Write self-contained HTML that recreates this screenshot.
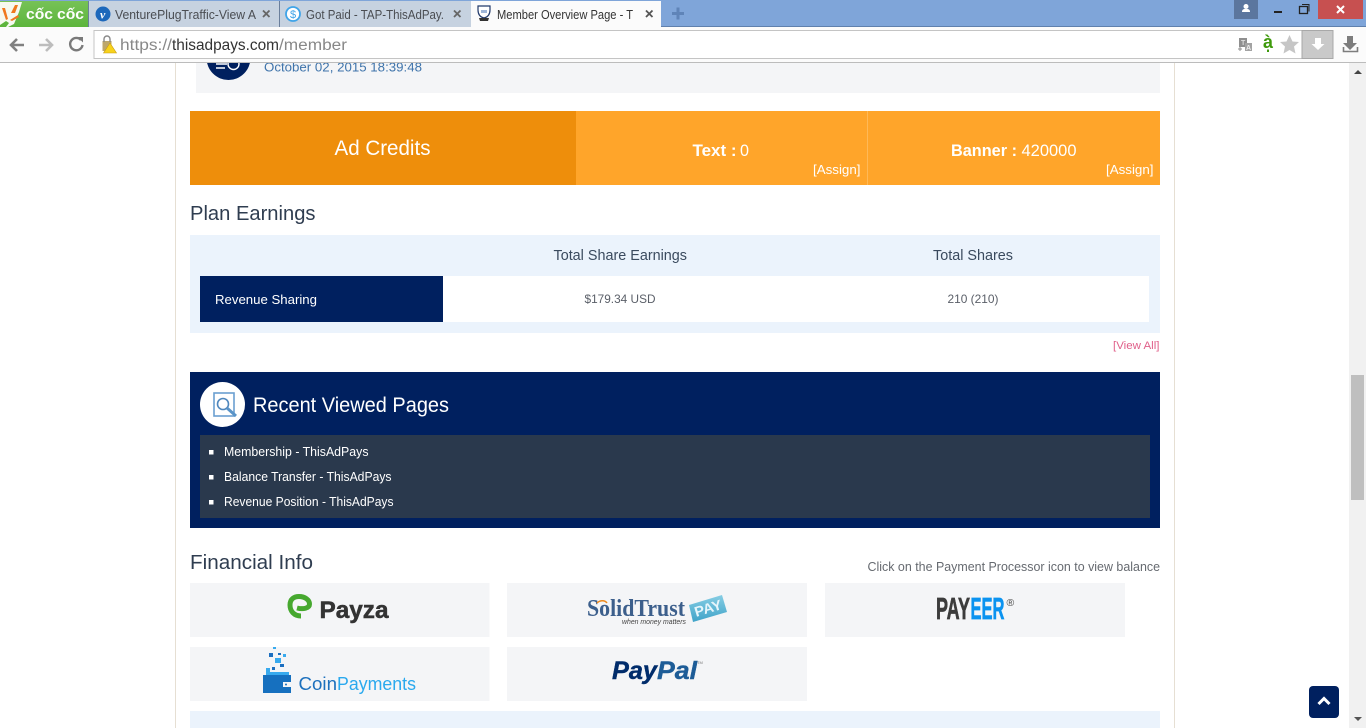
<!DOCTYPE html>
<html><head><meta charset="utf-8"><title>Member Overview Page</title>
<style>
html,body{margin:0;padding:0;width:1366px;height:728px;overflow:hidden;background:#fff}
svg{display:block}
text{font-family:"Liberation Sans","DejaVu Sans",sans-serif;white-space:pre}
</style></head><body>
<svg width="1366" height="728" viewBox="0 0 1366 728" xmlns="http://www.w3.org/2000/svg">
<defs>
<linearGradient id="g" x1="0" y1="0" x2="0" y2="1"><stop offset="0" stop-color="#77c257"/><stop offset="1" stop-color="#5db53c"/></linearGradient>
<linearGradient id="p" x1="0" y1="0" x2="0" y2="1"><stop offset="0" stop-color="#86cde4"/><stop offset="1" stop-color="#3fa3c8"/></linearGradient>
</defs>
<!-- page -->
<rect width="1366" height="728" fill="#fff"/>
<rect x="175" y="63" width="1" height="665" fill="#e6dfd3"/>
<rect x="1174" y="63" width="1" height="665" fill="#e6dfd3"/>
<rect x="196" y="63" width="964" height="30" fill="#f4f5f7"/>
<circle cx="228.500" cy="58" r="22" fill="#00205f"/>
<path d="M216 64h11M216 68h9" stroke="#fff" stroke-width="1.500"/>
<circle cx="233.500" cy="64" r="5.500" fill="none" stroke="#fff" stroke-width="1.400"/>
<text x="264" y="71.500" font-size="13" fill="#3f74ab" textLength="158" lengthAdjust="spacingAndGlyphs">October 02, 2015 18:39:48</text>

<rect x="190" y="111" width="386" height="74" fill="#ee8e0b"/>
<rect x="576" y="111" width="584" height="74" fill="#ffa52a"/>
<rect x="867" y="111" width="1" height="74" fill="#ffb957"/>
<text x="334.500" y="155" font-size="21" fill="#fff" textLength="96" lengthAdjust="spacingAndGlyphs">Ad Credits</text>
<text x="692.500" y="156" font-size="17" fill="#fff" font-weight="700" textLength="44" lengthAdjust="spacingAndGlyphs">Text :</text>
<text x="740" y="156" font-size="17" fill="#fff" textLength="9" lengthAdjust="spacingAndGlyphs">0</text>
<text x="813" y="174" font-size="13" fill="#fff" textLength="47.500" lengthAdjust="spacingAndGlyphs">[Assign]</text>
<text x="951" y="156" font-size="17" fill="#fff" font-weight="700" textLength="66" lengthAdjust="spacingAndGlyphs">Banner :</text>
<text x="1021.500" y="156" font-size="17" fill="#fff" textLength="55" lengthAdjust="spacingAndGlyphs">420000</text>
<text x="1106" y="174" font-size="13" fill="#fff" textLength="47.500" lengthAdjust="spacingAndGlyphs">[Assign]</text>

<text x="190" y="220" font-size="20.500" fill="#2f3d50" textLength="125.500" lengthAdjust="spacingAndGlyphs">Plan Earnings</text>
<rect x="190" y="235" width="970" height="98" fill="#ebf3fc"/>
<rect x="200" y="276" width="949" height="46" fill="#fff"/>
<rect x="200" y="276" width="243" height="46" fill="#00205f"/>
<text x="553.500" y="260" font-size="14.500" fill="#3a4a5e" textLength="133.500" lengthAdjust="spacingAndGlyphs">Total Share Earnings</text>
<text x="933" y="260" font-size="14.500" fill="#3a4a5e" textLength="80" lengthAdjust="spacingAndGlyphs">Total Shares</text>
<text x="215" y="304" font-size="13" fill="#fff" textLength="102" lengthAdjust="spacingAndGlyphs">Revenue Sharing</text>
<text x="584.500" y="303" font-size="12" fill="#5a5f68" textLength="71" lengthAdjust="spacingAndGlyphs">$179.34 USD</text>
<text x="947.500" y="303" font-size="12" fill="#5a5f68" textLength="51" lengthAdjust="spacingAndGlyphs">210 (210)</text>
<text x="1113" y="349" font-size="11" fill="#e0608a" textLength="46.500" lengthAdjust="spacingAndGlyphs">[View All]</text>

<rect x="190" y="372" width="970" height="156" fill="#00205f"/>
<circle cx="222.500" cy="404.500" r="22.500" fill="#fff"/>
<rect x="214" y="393" width="20" height="23" fill="none" stroke="#6a9fd0" stroke-width="1.600"/>
<circle cx="223" cy="404" r="5.500" fill="none" stroke="#4f87bd" stroke-width="1.600"/>
<path d="M227 408l9 8" stroke="#5a94c8" stroke-width="3"/>
<text x="253" y="412" font-size="21.500" fill="#fff" textLength="196" lengthAdjust="spacingAndGlyphs">Recent Viewed Pages</text>
<rect x="200" y="435" width="950" height="83" fill="#2a394d"/>
<rect x="209" y="450" width="4.500" height="4.500" fill="#fff"/>
<rect x="209" y="475" width="4.500" height="4.500" fill="#fff"/>
<rect x="209" y="500" width="4.500" height="4.500" fill="#fff"/>
<text x="224" y="456" font-size="13" fill="#fff" textLength="144.500" lengthAdjust="spacingAndGlyphs">Membership - ThisAdPays</text>
<text x="224" y="481" font-size="13" fill="#fff" textLength="167.500" lengthAdjust="spacingAndGlyphs">Balance Transfer - ThisAdPays</text>
<text x="224" y="506" font-size="13" fill="#fff" textLength="169.500" lengthAdjust="spacingAndGlyphs">Revenue Position - ThisAdPays</text>

<text x="190" y="569" font-size="20.500" fill="#2f3d50" textLength="123" lengthAdjust="spacingAndGlyphs">Financial Info</text>
<text x="867.500" y="571" font-size="12.500" fill="#666a70" textLength="292.500" lengthAdjust="spacingAndGlyphs">Click on the Payment Processor icon to view balance</text>

<rect x="190" y="583" width="299.500" height="54" fill="#f4f5f7"/>
<rect x="507" y="583" width="300" height="54" fill="#f4f5f7"/>
<rect x="825" y="583" width="300" height="54" fill="#f4f5f7"/>
<rect x="190" y="647" width="299.500" height="54" fill="#f4f5f7"/>
<rect x="507" y="647" width="300" height="54" fill="#f4f5f7"/>
<rect x="190" y="711" width="970" height="17" fill="#ebf3fc"/>

<!-- Payza -->
<path d="M301 616C294 616 290 611 290 605C290 599 294 596.500 299 596.500C305 596.500 309.500 600 309.500 604C309.500 608.500 303 609.500 297 608" fill="none" stroke="#46a82f" stroke-width="5"/>
<text x="319.500" y="618" font-size="24" font-weight="700" fill="#333" stroke="#333" stroke-width=".5" textLength="69" lengthAdjust="spacingAndGlyphs">Payza</text>
<!-- SolidTrust -->
<text x="587" y="616" font-size="24" font-weight="700" fill="#3c5f8c" style="font-family:'Liberation Serif',serif" textLength="98" lengthAdjust="spacingAndGlyphs">SolidTrust</text>
<path d="M597 603c3-3 8-3 10 0" stroke="#ee8a1d" stroke-width="1.500" fill="none"/>
<text x="622" y="624" font-size="7.500" font-style="italic" fill="#444" textLength="64" lengthAdjust="spacingAndGlyphs">when money matters</text>
<path d="M689 605l33-10 5 17-34 10z" fill="url(#p)"/>
<text x="694" y="613" font-size="14" font-weight="700" fill="#e6f5fb" textLength="28" lengthAdjust="spacingAndGlyphs" transform="rotate(-17 708 608)">PAY</text>
<!-- Payeer -->
<text x="936" y="619" font-size="30.500" font-weight="700" fill="#3c3c3c" stroke="#3c3c3c" stroke-width=".7" textLength="34" lengthAdjust="spacingAndGlyphs">PAY</text>
<text x="970.500" y="619" font-size="30.500" font-weight="700" fill="#0b93f0" stroke="#0b93f0" stroke-width=".7" textLength="34" lengthAdjust="spacingAndGlyphs">EER</text>
<text x="1006.500" y="606" font-size="10.500" fill="#444">®</text>
<!-- CoinPayments -->
<path d="M263 675h28v18h-28z" fill="#1670bf"/>
<rect x="283" y="682" width="8" height="5" fill="#f4f5f7"/>
<circle cx="286" cy="684.500" r="1" fill="#1670bf"/>
<g fill="#1c6fc0"><rect x="269" y="653" width="4" height="4"/><rect x="278" y="653" width="3" height="2"/><rect x="280" y="664" width="4" height="3"/><rect x="272" y="667" width="3" height="3"/></g>
<g fill="#38aaee"><rect x="275" y="658" width="6" height="5"/><rect x="273" y="647" width="3" height="2"/><rect x="283" y="654" width="3" height="3"/><rect x="266" y="668" width="4" height="4"/><path d="M266 672h23v3h-23z"/></g>
<text x="298.500" y="690" font-size="18" fill="#1c70bd" textLength="38.500" lengthAdjust="spacingAndGlyphs">Coin</text>
<text x="337" y="690" font-size="18" fill="#2aa9ee" textLength="79" lengthAdjust="spacingAndGlyphs">Payments</text>
<!-- PayPal -->
<text x="612" y="679" font-size="25" font-weight="700" font-style="italic" fill="#002c6b" stroke="#002c6b" stroke-width=".4" textLength="45" lengthAdjust="spacingAndGlyphs">Pay</text>
<text x="657" y="679" font-size="25" font-weight="700" font-style="italic" fill="#1d5c97" stroke="#1d5c97" stroke-width=".4" textLength="40" lengthAdjust="spacingAndGlyphs">Pal</text>
<text x="697" y="664" font-size="4" fill="#777">TM</text>

<!-- back to top -->
<rect x="1309" y="686" width="30" height="32" rx="4" fill="#00205f"/>
<path d="M1318.500 704l5.500-5.500 5.500 5.500" fill="none" stroke="#fff" stroke-width="3"/>

<!-- scrollbar -->
<rect x="1349" y="63" width="17" height="665" fill="#f1f1f1"/>
<rect x="1351" y="375" width="13" height="125" fill="#bfbfbf"/>
<path d="M1354 74h8l-4-4z" fill="#444"/>
<path d="M1354 717h8l-4 4z" fill="#555"/>

<!-- browser chrome -->
<rect y="0" width="1366" height="27" fill="#7fa5d9"/>
<rect y="26" width="1366" height="1" fill="#5f80ad"/>
<rect x="0" y="1" width="88" height="26" fill="url(#g)"/>
<path d="M0 2h22L19 12 14 24 8 27H0z" fill="#f6f9ef"/>
<path d="M2 8l3 0 3 11-2 1zM11 13l4-8 3 0-3 8zM10 20l8-5 1 2-7 4z" fill="#f0781e"/>
<path d="M0 25l6-4 3 2-3 4H0z" fill="#5db53c"/>
<text x="26" y="19" font-size="15" font-weight="700" fill="#fff" textLength="27" lengthAdjust="spacingAndGlyphs">cốc</text>
<text x="57" y="19" font-size="15" font-weight="700" fill="#fff" textLength="27" lengthAdjust="spacingAndGlyphs">cốc</text>
<rect x="88" y="1" width="191" height="26" fill="#c6d2e0"/>
<rect x="280" y="1" width="191" height="26" fill="#c6d2e0"/>
<rect x="88" y="1" width="1" height="26" fill="#6a7f9c"/>
<rect x="279" y="1" width="1" height="26" fill="#6a7f9c"/>
<rect x="471" y="1" width="190" height="26" fill="#fbfbfb"/>
<circle cx="103" cy="14" r="7.500" fill="#1d68bb"/>
<text x="100" y="18.500" font-size="12" font-style="italic" font-weight="700" fill="#fff" style="font-family:'Liberation Serif',serif">v</text>
<circle cx="293" cy="14" r="7" fill="#fff" stroke="#3fa4e8" stroke-width="1.800"/>
<text x="290" y="18" font-size="11" fill="#3fa4e8">$</text>
<path d="M478 6h12v4c0 4-2 7-6 8-4-1-6-4-6-8z" fill="#fff" stroke="#223a6b" stroke-width="1.200"/>
<path d="M481 10h6v3h-6z" fill="#9fb6d8"/>
<path d="M479 18h10l-1 3h-8z" fill="#333"/>
<text x="115" y="19" font-size="13" fill="#4a4d52" textLength="141" lengthAdjust="spacingAndGlyphs">VenturePlugTraffic-View A</text>
<text x="306" y="19" font-size="13" fill="#4a4d52" textLength="138" lengthAdjust="spacingAndGlyphs">Got Paid - TAP-ThisAdPay.</text>
<text x="497" y="19" font-size="13" fill="#333" textLength="136" lengthAdjust="spacingAndGlyphs">Member Overview Page - T</text>
<path d="M196 10.500l6.500 6.500M202.500 10.500l-6.500 6.500" transform="translate(67 0)" stroke="#666" stroke-width="1.800"/>
<path d="M196 10.500l6.500 6.500M202.500 10.500l-6.500 6.500" transform="translate(258 0)" stroke="#666" stroke-width="1.800"/>
<path d="M196 10.500l6.500 6.500M202.500 10.500l-6.500 6.500" transform="translate(450 0)" stroke="#555" stroke-width="1.800"/>
<path d="M672 13.500h12M678 7.500v12" stroke="#5f84b8" stroke-width="3"/>

<rect x="1234" y="0" width="24" height="19" fill="#5b769e"/>
<circle cx="1246" cy="6.500" r="2.500" fill="#fff"/><path d="M1242 12c0-3 2-3 4-3s4 0 4 3z" fill="#fff"/>
<rect x="1274" y="11" width="8" height="2" fill="#222"/>
<rect x="1299.500" y="6.500" width="8" height="7" fill="none" stroke="#222" stroke-width="1.300"/>
<path d="M1302 4.500h7v7" fill="none" stroke="#222" stroke-width="1"/>
<rect x="1318" y="0" width="45" height="19" fill="#c75050"/>
<path d="M1337 6l7 7M1344 6l-7 7" stroke="#fff" stroke-width="2"/>

<rect y="27" width="1366" height="35" fill="#fbfbfb"/>
<rect y="62" width="1366" height="1" fill="#bcbcbc"/>
<path d="M24 45H12M17 39l-6 6 6 6" fill="none" stroke="#808080" stroke-width="2.600"/>
<path d="M39 45h12M46 39l6 6-6 6" fill="none" stroke="#bdbdbd" stroke-width="2.600"/>
<path d="M81 40a6.200 6.200 0 1 0 1.500 5" fill="none" stroke="#7a7a7a" stroke-width="2.400"/>
<path d="M77.500 37l5.500 0 0 5.500z" fill="#7a7a7a"/>
<rect x="94" y="30.500" width="1239" height="28" fill="#fff" stroke="#c4c4c4" stroke-width="1"/>
<rect x="1302" y="30.500" width="31" height="28" fill="#c9c9c9" stroke="#a8a8a8"/>
<path d="M1315 38h6v6h3.500l-6.500 6-6.500-6h3.500z" fill="#fff"/>
<rect x="102.500" y="41" width="9" height="10" fill="#bda76b"/>
<path d="M104 42v-3a3 3 0 0 1 6 0v3" fill="none" stroke="#888" stroke-width="1.400"/>
<path d="M110 43l6.500 10h-13z" fill="#f7d21c" stroke="#c89b10" stroke-width=".6"/>
<text x="120" y="50" font-size="15.500" fill="#888" textLength="52" lengthAdjust="spacingAndGlyphs">https://</text>
<text x="172" y="50" font-size="15.500" fill="#333" textLength="107" lengthAdjust="spacingAndGlyphs">thisadpays.com</text>
<text x="279" y="50" font-size="15.500" fill="#888" textLength="68" lengthAdjust="spacingAndGlyphs">/member</text>
<rect x="1239" y="38" width="8" height="9" fill="#8f8f8f"/>
<rect x="1245" y="43" width="7" height="8" fill="#a3a3a3"/>
<text x="1241" y="45" font-size="7" font-weight="700" fill="#ddd">T</text>
<text x="1246" y="50" font-size="7" font-weight="700" fill="#eee">A</text>
<path d="M1238 49h4M1240 47v4" stroke="#8f8f8f" stroke-width="1"/>
<text x="1263" y="48" font-size="18" font-weight="700" fill="#3f9a0c" textLength="10" lengthAdjust="spacingAndGlyphs">à</text>
<path d="M1268 49.500v2.500" stroke="#3f9a0c" stroke-width="2"/>
<path d="M1289.500 35l3 6.500 6.500.5-5 4.500 1.500 7-6-3.500-6 3.500 1.500-7-5-4.500 6.500-.5z" fill="#c6c6c6"/>
<path d="M1347 36h6v7h4l-7 7-7-7h4z" fill="#7d7d7d"/>
<path d="M1343.500 47v4.500h14V47" fill="none" stroke="#7d7d7d" stroke-width="1.600"/>
</svg>
</body></html>
